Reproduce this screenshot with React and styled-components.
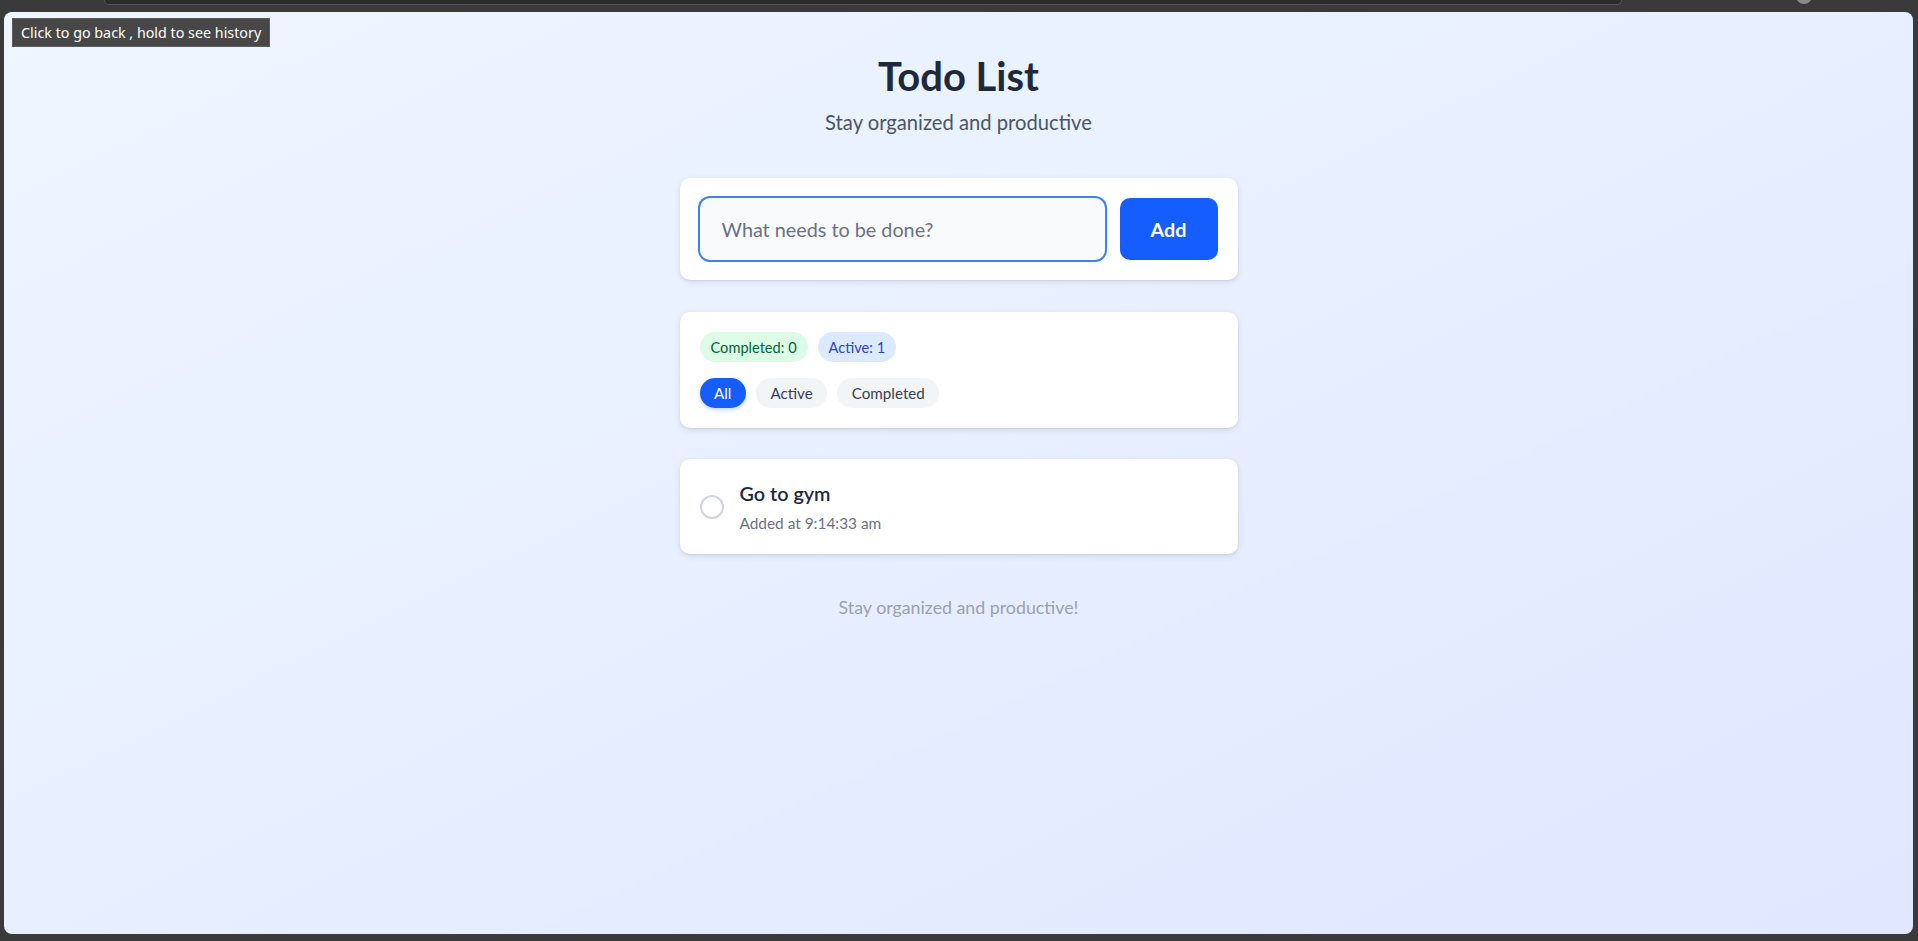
import React, { useState } from 'react';
import styled, { createGlobalStyle } from 'styled-components';

const GlobalStyle = createGlobalStyle`
  html, body { margin: 0; padding: 0; }
  body {
    background: #3a3a3a;
    font-family: Lato, "Noto Sans", sans-serif;
    overflow: hidden;
  }
  * { box-sizing: border-box; }
`;

const Chrome = styled.div`
  position: relative;
  width: 1918px;
  height: 941px;
  display: flex;
  flex-direction: column;
  background: #3a3a3a;
`;

const TopStrip = styled.div`
  height: 12px;
  flex: none;
  display: flex;
  align-items: flex-start;
  padding-left: 104px;
`;

const AddressBar = styled.div`
  width: 1518px;
  height: 5px;
  background: #2b2b2b;
  border: 1px solid #555;
  border-top: none;
  border-radius: 0 0 10px 10px;
`;

const ProfileDot = styled.div`
  width: 16px;
  height: 16px;
  margin: -12px 0 0 174px;
  border-radius: 50%;
  background: #8a8a8a;
`;

const Viewport = styled.div`
  flex: 1;
  margin: 0 5px 7px 4px;
  border-radius: 8px;
  background: linear-gradient(to bottom right, #eff6ff, #e0e7ff);
  overflow: hidden;
`;

const Tooltip = styled.div`
  position: absolute;
  left: 12px;
  top: 18px;
  height: 29px;
  padding: 0 8px;
  display: flex;
  align-items: center;
  background: #474747;
  border: 1px solid #5c5c5c;
  color: #ffffff;
  font-family: "Noto Sans", sans-serif;
  font-size: 14.3px;
  white-space: nowrap;
`;

const Main = styled.main`
  width: 558px;
  margin: 0 auto;
  padding-top: 40px;
  display: flex;
  flex-direction: column;
`;

const Header = styled.header`
  text-align: center;
  margin-bottom: 42px;
`;

const Title = styled.h1`
  margin: 0;
  font-size: 40px;
  line-height: 48px;
  font-weight: 700;
  color: #1e2939;
`;

const Subtitle = styled.p`
  margin: 8px 0 0;
  font-size: 20.2px;
  line-height: 28px;
  color: #4a5565;
`;

const Card = styled.section`
  background: #ffffff;
  border-radius: 10px;
  box-shadow: 0 2px 6px rgba(15, 23, 42, 0.1), 0 1px 2px rgba(15, 23, 42, 0.06);
  padding: 20px;
  margin-bottom: ${(p) => p.$gap || 32}px;
`;

const AddForm = styled.form`
  display: flex;
  align-items: center;
  gap: 15px;
`;

const TaskInput = styled.input`
  flex: 1;
  min-width: 0;
  height: 62px;
  padding: 0 21px;
  border: 1px solid transparent;
  border-radius: 10px;
  background: #f9fafb;
  box-shadow: 0 0 0 2px #3b82f6;
  font-family: inherit;
  font-size: 19.8px;
  color: #1e2939;
  outline: none;
  &::placeholder { color: #6a7282; }
`;

const AddButton = styled.button`
  width: 98px;
  height: 62px;
  border: none;
  border-radius: 10px;
  background: #155dfc;
  color: #ffffff;
  font-family: inherit;
  font-size: 19.8px;
  font-weight: 700;
  cursor: pointer;
`;

const Row = styled.div`
  display: flex;
  align-items: center;
  gap: 10px;
  & + & { margin-top: 16px; }
`;

const Badge = styled.span`
  height: 30px;
  padding: 0 11px;
  display: inline-flex;
  align-items: center;
  border-radius: 999px;
  font-size: 14.6px;
  background: ${(p) => (p.$tone === 'green' ? '#dcfce7' : '#dbeafe')};
  color: ${(p) => (p.$tone === 'green' ? '#016630' : '#2a45c2')};
`;

const FilterButton = styled.button`
  height: 30px;
  padding: 0 14.5px;
  border: none;
  border-radius: 999px;
  font-family: inherit;
  font-size: 15.2px;
  cursor: pointer;
  background: ${(p) => (p.$active ? '#155dfc' : '#f3f4f6')};
  color: ${(p) => (p.$active ? '#ffffff' : '#364153')};
  box-shadow: ${(p) => (p.$active ? '0 2px 4px rgba(21, 93, 252, 0.25)' : 'none')};
`;

const TodoItem = styled.div`
  display: flex;
  align-items: center;
  gap: 16px;
`;

const Check = styled.button`
  flex: none;
  width: 24px;
  height: 24px;
  padding: 0;
  border-radius: 50%;
  border: 2px solid #d1d5dc;
  background: transparent;
  cursor: pointer;
`;

const TodoText = styled.div`
  display: flex;
  flex-direction: column;
`;

const TodoTitle = styled.span`
  font-size: 19.8px;
  line-height: 28px;
  font-weight: 600;
  color: #1e2939;
`;

const TodoMeta = styled.span`
  margin-top: 5px;
  font-size: 15.4px;
  line-height: 22px;
  color: #6a7282;
`;

const Footer = styled.p`
  margin: 8px 0 0;
  text-align: center;
  font-size: 17.8px;
  line-height: 26px;
  color: #99a1af;
`;

export default function App() {
  const [filter, setFilter] = useState('All');
  const [text, setText] = useState('');
  const todos = [{ id: 1, title: 'Go to gym', time: '9:14:33 am', done: false }];
  const completed = todos.filter((t) => t.done).length;

  return (
    <>
      <GlobalStyle />
      <Chrome>
        <TopStrip>
          <AddressBar />
          <ProfileDot />
        </TopStrip>
        <Viewport>
          <Main>
            <Header>
              <Title>Todo List</Title>
              <Subtitle>Stay organized and productive</Subtitle>
            </Header>

            <Card>
              <AddForm onSubmit={(e) => e.preventDefault()}>
                <TaskInput
                  placeholder="What needs to be done?"
                  value={text}
                  onChange={(e) => setText(e.target.value)}
                />
                <AddButton type="submit">Add</AddButton>
              </AddForm>
            </Card>

            <Card $gap={31}>
              <Row>
                <Badge $tone="green">Completed: {completed}</Badge>
                <Badge $tone="blue">Active: {todos.length - completed}</Badge>
              </Row>
              <Row>
                {['All', 'Active', 'Completed'].map((f) => (
                  <FilterButton key={f} $active={filter === f} onClick={() => setFilter(f)}>
                    {f}
                  </FilterButton>
                ))}
              </Row>
            </Card>

            {todos.map((t) => (
              <Card key={t.id}>
                <TodoItem>
                  <Check aria-label="toggle" />
                  <TodoText>
                    <TodoTitle>{t.title}</TodoTitle>
                    <TodoMeta>Added at {t.time}</TodoMeta>
                  </TodoText>
                </TodoItem>
              </Card>
            ))}

            <Footer>Stay organized and productive!</Footer>
          </Main>
        </Viewport>
        <Tooltip>Click to go back , hold to see history</Tooltip>
      </Chrome>
    </>
  );
}
